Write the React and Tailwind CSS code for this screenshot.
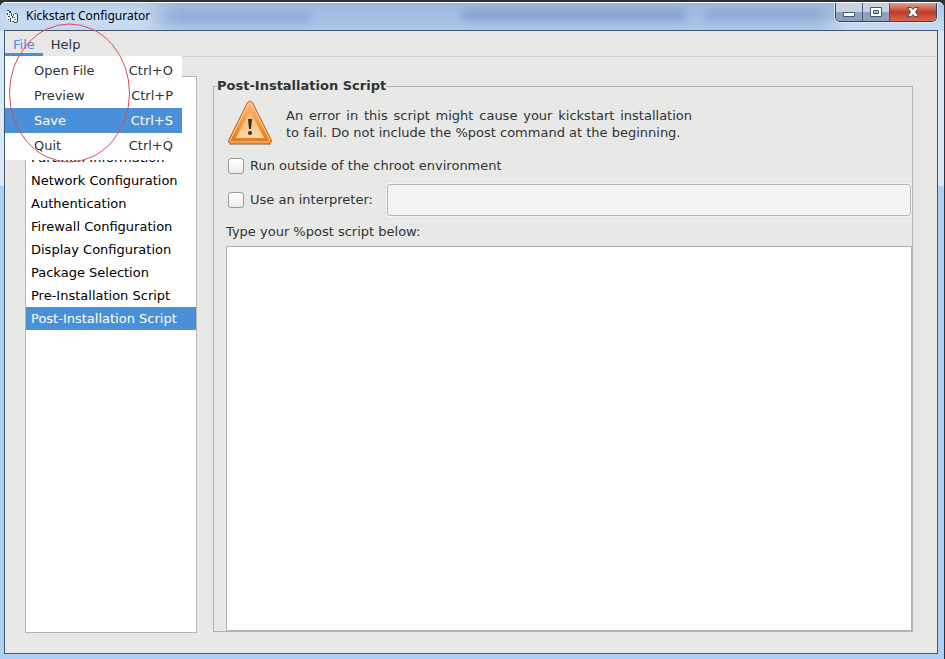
import React, { useState } from 'react';

const menuItems = [
  { label: 'Open File', keys: 'Ctrl+O' },
  { label: 'Preview', keys: 'Ctrl+P' },
  { label: 'Save', keys: 'Ctrl+S' },
  { label: 'Quit', keys: 'Ctrl+Q' },
];

const sections = [
  'Partition Information',
  'Network Configuration',
  'Authentication',
  'Firewall Configuration',
  'Display Configuration',
  'Package Selection',
  'Pre-Installation Script',
  'Post-Installation Script',
];

function AppIcon() {
  return (
    <svg className="w-4 h-4" viewBox="0 0 16 16" aria-hidden="true">
      <path d="M2 2l4 1 2 3 4-1v9l-5 1-3-3-2-1z" fill="#f2f6f4" />
      <path d="M2 2h2v1H2zM4 3h2v2H4zM2 5h1v2H2zM6 5h1v3H6zM3 8h2v1H3zM5 10h1v4H5zM8 6h1v1H8zM7 8h1v2H7zM3 11h1v1H3zM7 13h2v1H7zM10 5h2v1h-2zM12 6h1v8h-1zM9 14h3v1H9z" fill="#33403c" />
      <path d="M8 9h2v1H8zM9 11h2v1H9zM8 7h1v1H8zM4 6h1v1H4z" fill="#4aa85a" />
    </svg>
  );
}

function WarningIcon() {
  return (
    <svg className="w-12 h-12 shrink-0" viewBox="0 0 48 48" aria-hidden="true">
      <defs>
        <linearGradient id="edge" x1="0" y1="0" x2="0" y2="1">
          <stop offset="0" stopColor="#fcbc84" />
          <stop offset="0.5" stopColor="#f59a42" />
          <stop offset="1" stopColor="#e07a18" />
        </linearGradient>
        <linearGradient id="face" x1="0" y1="0" x2="0" y2="1">
          <stop offset="0" stopColor="#f9b264" />
          <stop offset="1" stopColor="#fdd9a6" />
        </linearGradient>
      </defs>
      <path d="M4 44h40" stroke="#8a7460" strokeWidth="2" strokeLinecap="round" opacity="0.6" />
      <path d="M21.500 2.500q2.500-3 5 0l18.500 37q1.500 3.500-2 3.500H5q-3.500 0-2-3.500z" fill="url(#edge)" stroke="#c8661a" />
      <path d="M22.500 3.500q1.500-2 3 0l18.300 36.500q.6 2-1.300 2H5.500q-1.900 0-1.300-2z" fill="none" stroke="#fdd0a2" />
      <path d="M24 11l14 27H10z" fill="url(#face)" />
      <path d="M22 19h4l-1 10h-2z" fill="#35302a" />
      <circle cx="24" cy="33" r="2" fill="#35302a" />
    </svg>
  );
}

function TitleBar() {
  return (
    <header className="relative flex h-[29px] items-start justify-between overflow-hidden rounded-t-md border-t border-white bg-linear-to-b from-[#9eb7dd] to-[#a8c8ec] pl-[5px] pr-[7px]">
      <div className="absolute left-[150px] top-2 h-3 w-40 bg-[#7f9aca] opacity-50 blur-xs" />
      <div className="absolute left-[462px] top-2 h-2 w-56 bg-[#647fae] opacity-60 blur-xs" />
      <div className="absolute left-[705px] top-2 h-2 w-36 bg-[#7288b2] opacity-50 blur-xs" />
      <div className="absolute -left-4 top-0 h-8 w-44 bg-[#dce9f8] opacity-80 blur-md" />
      <div className="absolute -right-4 top-2 h-8 w-32 bg-[#dce9f8] opacity-70 blur-md" />
      <div className="relative flex items-center gap-[5px] pt-1">
        <AppIcon />
        <h1 className="font-['Noto_Sans',sans-serif] text-[12px] leading-[18px] text-black">Kickstart Configurator</h1>
      </div>
      <div className="relative flex h-[19px] overflow-hidden rounded-b-[5px] border border-t-0 border-[#34445c] shadow-[0_0_0_1px_#dce8f6]">
        <button aria-label="Minimize" className="flex w-[27px] items-center justify-center border-r border-[#4a5b75] bg-linear-to-b from-[#c8d2e2] from-50% to-[#8fa1be] to-50%">
          <svg className="h-3 w-3" viewBox="0 0 12 12"><path d="M.5 6.500h11v4H.5z" fill="#fff" stroke="#48566c" /></svg>
        </button>
        <button aria-label="Maximize" className="flex w-[27px] items-center justify-center border-r border-[#4a5b75] bg-linear-to-b from-[#c8d2e2] from-50% to-[#8fa1be] to-50%">
          <svg className="h-3 w-3" viewBox="0 0 12 12"><path d="M.5 1.500h11v9H.5zM3.500 4.500v3h5v-3z" fill="#fff" fillRule="evenodd" stroke="#48566c" /></svg>
        </button>
        <button aria-label="Close" className="flex w-[46px] items-center justify-center bg-linear-to-b from-[#dda193] from-0% via-[#c0392a] via-50% to-[#d66a4e]">
          <svg className="h-3 w-3" viewBox="0 0 12 12"><path d="M.5 1.500h4L6 3.500l1.500-2h4L8.500 6l3 4.500h-4L6 8.500l-1.500 2h-4l3-4.500z" fill="#fff" stroke="#5c4a58" /></svg>
        </button>
      </div>
    </header>
  );
}

function FileMenu() {
  return (
    <div role="menu" className="absolute left-0 top-full z-10 w-[177px] bg-white py-0.5">
      {menuItems.map((item) => (
        <button
          key={item.label}
          role="menuitem"
          className={`flex h-[25px] w-full items-center justify-between pl-[29px] pr-[9px] ${
            item.label === 'Save' ? 'bg-[#4a90d9] text-white' : 'text-[#2e3436]'
          }`}
        >
          <span>{item.label}</span>
          <span>{item.keys}</span>
        </button>
      ))}
    </div>
  );
}

const checkbox =
  'size-4 appearance-none rounded-[3px] border border-[#999b98] bg-linear-to-b from-white to-[#ececea] checked:bg-[#4a90d9]';

function ScriptPanel() {
  const [outside, setOutside] = useState(false);
  const [interpreter, setInterpreter] = useState(false);

  return (
    <fieldset className="mb-px flex min-w-0 flex-1 flex-col border border-[#b4b4b2] pl-3">
      <legend className="-ml-[9px] h-5 font-bold leading-5">Post-Installation Script</legend>
      <div className="flex items-start gap-3 pt-1">
        <WarningIcon />
        <p className="w-[406px] pt-[7px] text-justify leading-[17px]">
          An error in this script might cause your kickstart installation to fail. Do not include the %post command at the beginning.
        </p>
      </div>
      <label className="flex h-8 items-center gap-[6px] pl-0.5 pt-1">
        <input type="checkbox" className={checkbox} checked={outside} onChange={(e) => setOutside(e.target.checked)} />
        Run outside of the chroot environment
      </label>
      <div className="flex h-10 items-center gap-[14px] pr-px">
        <label className="flex items-center gap-[6px] pl-0.5">
          <input type="checkbox" className={checkbox} checked={interpreter} onChange={(e) => setInterpreter(e.target.checked)} />
          Use an interpreter:
        </label>
        <input
          type="text"
          aria-label="Interpreter"
          disabled={!interpreter}
          className="h-8 min-w-0 flex-1 rounded-[3px] border border-[#b4b4b2] bg-[#f3f3f2] px-2 shadow-[0_0_0_1px_#f6f6f5]"
        />
      </div>
      <label htmlFor="post-script" className="h-[26px] leading-6">Type your %post script below:</label>
      <textarea id="post-script" className="min-h-0 flex-1 resize-none border border-[#b0b0ae] bg-white p-1 outline-none" />
    </fieldset>
  );
}

export default function App() {
  return (
    <div className="flex min-h-screen flex-col bg-[#2b333d] pr-px pt-0.5 font-['DejaVu_Sans',sans-serif] text-[13px] text-[#2e3436]">
      <div className="flex flex-1 flex-col rounded-t-md bg-linear-to-b from-[#dbe8f7] from-28% to-[#aed0f3] to-28%">
        <TitleBar />
        <div className="relative mb-[5px] ml-1 mr-[6px] -mt-px flex flex-1 flex-col border border-[#42566f] bg-[#e8e8e6]">
          <nav className="relative flex h-[26px] border-b border-[#cfcfcd]">
            <button className="border-b-3 border-[#4a90d9] px-2 pt-1 text-[#4a90d9]">File</button>
            <button className="border-b-3 border-transparent px-2 pt-1">Help</button>
            <FileMenu />
          </nav>
          <main className="flex flex-1 gap-4 pb-5 pl-5 pr-6 pt-[19px]">
            {/* the open File menu hangs over the top of the list */}
            <ul className="w-[172px] shrink-0 border border-[#b4b4b2] bg-white pt-[69px] text-black">
              {sections.map((name) => (
                <li key={name}>
                  <button
                    className={`block h-[23px] w-full whitespace-nowrap px-[5px] text-left ${
                      name === 'Post-Installation Script' ? 'bg-[#4a90d9] text-white' : ''
                    }`}
                  >
                    {name}
                  </button>
                </li>
              ))}
            </ul>
            <ScriptPanel />
          </main>
          {/* hand-drawn ring around the File menu */}
          <svg className="pointer-events-none absolute -top-2 left-1 z-20 h-[140px] w-[122px]" viewBox="0 0 122 140" aria-hidden="true">
            <ellipse cx="60.500" cy="70" rx="60" ry="69" fill="none" stroke="#e0485a" />
          </svg>
        </div>
      </div>
    </div>
  );
}
